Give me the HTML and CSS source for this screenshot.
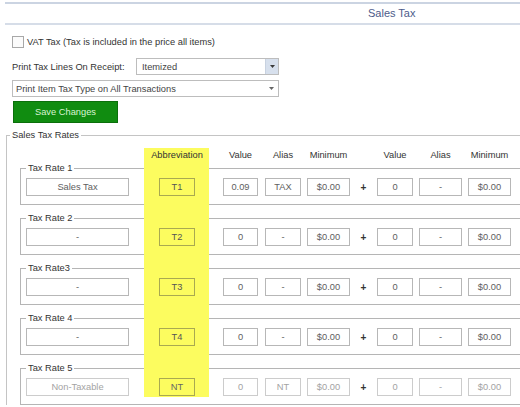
FILE: index.html
```html
<!DOCTYPE html>
<html>
<head>
<meta charset="utf-8">
<link rel="stylesheet" href="styles.css">
</head>
<body>
<div class="titlebar"><span class="title">Sales Tax</span></div>
<div class="content">
  <div class="check-row"><span class="checkbox"></span><span>VAT Tax (Tax is included in the price all items)</span></div>
  <div class="field-row">
    <span class="label">Print Tax Lines On Receipt:</span>
    <div class="select select-short">
      <span class="select-text">Itemized</span>
      <span class="select-btn"><svg width="5" height="3" viewBox="0 0 5 3"><path d="M0 0h5L2.5 3z" fill="#3a3a3a"/></svg></span>
    </div>
  </div>
  <div class="select select-long">
    <span class="select-text">Print Item Tax Type on All Transactions</span>
    <span class="select-arrow"><svg width="5" height="3" viewBox="0 0 5 3"><path d="M0 0h5L2.5 3z" fill="#666"/></svg></span>
  </div>
  <button class="save-btn">Save Changes</button>
</div>
<fieldset class="rates">
  <legend>Sales Tax Rates</legend>
  <div class="rates-inner">
    <div class="highlight"></div>
    <div class="cols head">
      <span class="c-name"></span>
      <span class="c-abbr">Abbreviation</span>
      <span class="c-val">Value</span>
      <span class="c-alias">Alias</span>
      <span class="c-min">Minimum</span>
      <span class="c-plus"></span>
      <span class="c-val2">Value</span>
      <span class="c-alias2">Alias</span>
      <span class="c-min2">Minimum</span>
    </div>
    <fieldset class="rate">
      <legend>Tax Rate 1</legend>
      <div class="cols">
        <span class="box c-name">Sales Tax</span>
        <span class="box c-abbr">T1</span>
        <span class="box c-val">0.09</span>
        <span class="box c-alias">TAX</span>
        <span class="box c-min">$0.00</span>
        <span class="c-plus">+</span>
        <span class="box c-val2">0</span>
        <span class="box c-alias2">-</span>
        <span class="box c-min2">$0.00</span>
      </div>
    </fieldset>
    <fieldset class="rate">
      <legend>Tax Rate 2</legend>
      <div class="cols">
        <span class="box c-name">-</span>
        <span class="box c-abbr">T2</span>
        <span class="box c-val">0</span>
        <span class="box c-alias">-</span>
        <span class="box c-min">$0.00</span>
        <span class="c-plus">+</span>
        <span class="box c-val2">0</span>
        <span class="box c-alias2">-</span>
        <span class="box c-min2">$0.00</span>
      </div>
    </fieldset>
    <fieldset class="rate">
      <legend>Tax Rate3</legend>
      <div class="cols">
        <span class="box c-name">-</span>
        <span class="box c-abbr">T3</span>
        <span class="box c-val">0</span>
        <span class="box c-alias">-</span>
        <span class="box c-min">$0.00</span>
        <span class="c-plus">+</span>
        <span class="box c-val2">0</span>
        <span class="box c-alias2">-</span>
        <span class="box c-min2">$0.00</span>
      </div>
    </fieldset>
    <fieldset class="rate">
      <legend>Tax Rate 4</legend>
      <div class="cols">
        <span class="box c-name">-</span>
        <span class="box c-abbr">T4</span>
        <span class="box c-val">0</span>
        <span class="box c-alias">-</span>
        <span class="box c-min">$0.00</span>
        <span class="c-plus">+</span>
        <span class="box c-val2">0</span>
        <span class="box c-alias2">-</span>
        <span class="box c-min2">$0.00</span>
      </div>
    </fieldset>
    <fieldset class="rate disabled">
      <legend>Tax Rate 5</legend>
      <div class="cols">
        <span class="box c-name">Non-Taxable</span>
        <span class="box c-abbr">NT</span>
        <span class="box c-val">0</span>
        <span class="box c-alias">NT</span>
        <span class="box c-min">$0.00</span>
        <span class="c-plus">+</span>
        <span class="box c-val2">0</span>
        <span class="box c-alias2">-</span>
        <span class="box c-min2">$0.00</span>
      </div>
    </fieldset>
  </div>
</fieldset>
</body>
</html>
```

FILE: styles.css
```css
html, body {
  margin: 0;
  padding: 0;
  overflow: hidden;
  background: #ffffff;
}
body {
  width: 520px;
  height: 407px;
  font-family: "Liberation Sans", Arial, sans-serif;
  font-size: 9.3px;
  color: #333333;
}
.titlebar {
  margin: 2px 0 0 5px;
  height: 19px;
  border-top: 2px solid #cbd4e2;
  border-bottom: 2px solid #d6dde8;
  padding-left: 363px;
  font-size: 11px;
  line-height: 19px;
  color: #4d5b8a;
}
.content {
  padding-left: 12px;
}
.check-row {
  display: flex;
  align-items: center;
  margin-top: 11px;
  height: 12px;
  color: #333;
}
.checkbox {
  box-sizing: border-box;
  width: 12px;
  height: 12px;
  border: 1px solid #a8a8a8;
  background: #fbfbfb;
  margin-right: 3px;
}
.field-row {
  display: flex;
  align-items: center;
  margin-top: 10px;
}
.label {
  width: 124px;
}
.select {
  box-sizing: border-box;
  height: 17px;
  border: 1px solid #bdbdbd;
  display: flex;
  align-items: stretch;
  background: #fff;
}
.select-short {
  width: 143px;
}
.select-long {
  width: 267px;
  margin-top: 5px;
}
.select-text {
  flex: 1;
  display: flex;
  align-items: center;
  padding-left: 5px;
  color: #444;
}
.select-long .select-text {
  padding-left: 3px;
}
.select-btn {
  width: 12px;
  background: #d7e0ed;
  border-left: 1px solid #c8d2e0;
  display: flex;
  align-items: center;
  justify-content: center;
}
.select-arrow {
  width: 14px;
  display: flex;
  align-items: center;
  justify-content: center;
}
.save-btn {
  display: block;
  margin: 4px 0 0 1px;
  padding: 0;
  width: 105px;
  height: 22px;
  background: #108c10;
  border: 1px solid #0b6f0b;
  color: #d8f4d2;
  font: inherit;
}
.rates {
  box-sizing: border-box;
  margin: 5px 0 0 6px;
  padding: 7px 0 0 13px;
  border: 1px solid #c4c4c4;
  border-right: 0;
  border-bottom: 0;
  width: 514px;
  min-width: 0;
}
.rates > legend {
  padding: 0 2px;
  margin-left: -10px;
  line-height: 14px;
  color: #333;
}
.rates-inner {
  position: relative;
}
.highlight {
  position: absolute;
  left: 124px;
  top: -1px;
  width: 65px;
  height: 249px;
  background: #fcfc5f;
  z-index: 1;
}
.cols {
  display: flex;
  align-items: center;
}
.head {
  height: 12px;
  line-height: 12px;
  margin-left: 6px;
  color: #333;
}
.head span {
  display: flex;
  justify-content: center;
  white-space: nowrap;
}
.head .c-abbr {
  position: relative;
  z-index: 2;
}
.c-name { width: 103px; }
.c-abbr { width: 36px; margin-left: 30px; }
.c-val { width: 35px; margin-left: 28px; }
.c-alias { width: 36px; margin-left: 7px; }
.c-min { width: 43px; margin-left: 6px; }
.c-plus { width: 13px; margin-left: 7px; }
.c-val2 { width: 36px; margin-left: 7px; }
.c-alias2 { width: 43px; margin-left: 6px; }
.c-min2 { width: 43px; margin-left: 6px; }
.rate {
  margin: 0 0 6px 0;
  padding: 3px 0 8px 5px;
  border: 1px solid #b5b5b5;
  border-right: 0;
  min-width: 0;
}
.rate:last-child {
  margin-bottom: 0;
}
.rate legend {
  padding: 0 2px;
  line-height: 14px;
  color: #333;
}
.box {
  box-sizing: border-box;
  height: 18px;
  border: 1px solid #b7b7b7;
  background: #ffffff;
  color: #606060;
  display: flex;
  align-items: center;
  justify-content: center;
  white-space: nowrap;
}
.box.c-abbr {
  position: relative;
  z-index: 2;
  background: transparent;
  border-color: #a9a950;
  color: #555;
}
.c-plus {
  text-align: center;
  font-weight: bold;
  font-size: 10px;
  color: #333;
}
.disabled .box {
  color: #a3a3a3;
  border-color: #cccccc;
}
.disabled .box.c-abbr {
  color: #666;
  border-color: #a9a950;
}
```
